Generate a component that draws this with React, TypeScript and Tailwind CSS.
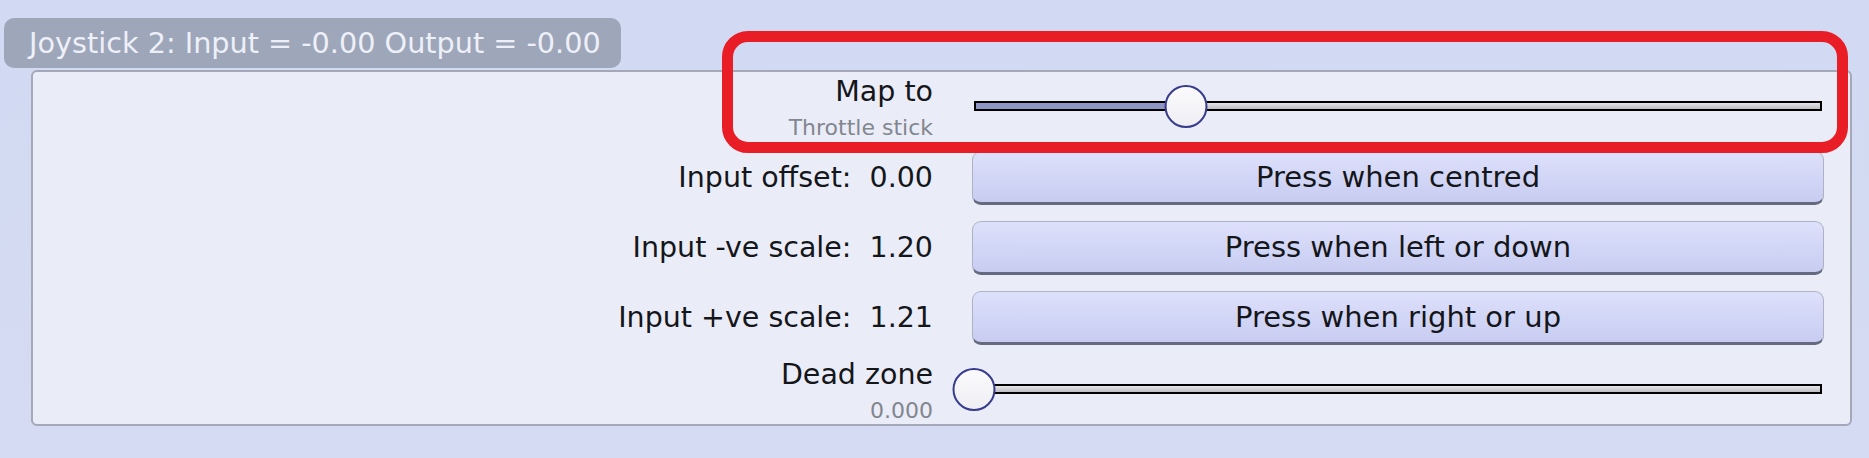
import React from 'react';

const FONT = "font-['DejaVu_Sans','Liberation_Sans',sans-serif]";

// 0..1 value slider, drawn like the app's own control
function Slider({ value }: { value: number }) {
  const pct = `${value * 100}%`;
  return (
    <div className="relative mx-[2px] h-[64px]">
      <div className="absolute left-0 right-0 top-[25px] h-[10px] border-2 border-black bg-gradient-to-b from-[#e6e6ea] to-[#bdbdc2]">
        <div className="h-full bg-[#8e96c6]" style={{ width: pct }} />
      </div>
      <div
        className="absolute top-[8.5px] h-[43px] w-[43px] -translate-x-1/2 rounded-full border-[2.5px] border-[#383c8c] bg-gradient-to-b from-[#fbfbfd] to-[#eeeef3]"
        style={{ left: pct }}
      />
    </div>
  );
}

function Row({ children, label, sub }: { children: React.ReactNode; label: string; sub?: string }) {
  return (
    <div className="flex items-center gap-[39px]">
      <div className="flex-1 text-right">
        <div className="text-[28.5px] leading-[32px] text-[#15161a] whitespace-pre">{label}</div>
        {sub && <div className="mt-[8px] text-[22px] leading-[24px] text-[#82868e]">{sub}</div>}
      </div>
      <div className="w-[852px]">{children}</div>
    </div>
  );
}

function PressButton({ text }: { text: string }) {
  return (
    <button className="h-[54px] w-full rounded-[9px] border border-[#aeb2c4] border-b-[3px] border-b-[#666a80] bg-gradient-to-b from-[#dde1fb] to-[#c8ccf1] text-[29px] leading-[32px] text-[#15161a]">
      {text}
    </button>
  );
}

export default function App() {
  return (
    <div className={`relative h-[458px] w-full overflow-hidden bg-gradient-to-b from-[#d2daf3] to-[#d4dbf2] pt-[18px] ${FONT}`}>
      {/* title tab */}
      <div className="ml-[4px] h-[50px] w-[617px] rounded-[10px] bg-[#9ea6ba] pl-[25px] text-[28.7px] leading-[50px] text-[#eef0f8]">
        Joystick 2: Input = -0.00 Output = -0.00
      </div>

      {/* settings panel */}
      <div className="ml-[31px] mr-[17px] mt-[2px] h-[356px] rounded-[6px] border-2 border-[#a4a8b8] bg-[#eaedf8] pr-[26px] pt-[4px]">
        <Row label="Map to" sub="Throttle stick">
          <Slider value={0.25} />
        </Row>
        <div className="mt-[11px] flex flex-col gap-[16px]">
          <Row label="Input offset:  0.00">
            <PressButton text="Press when centred" />
          </Row>
          <Row label="Input -ve scale:  1.20">
            <PressButton text="Press when left or down" />
          </Row>
          <Row label="Input +ve scale:  1.21">
            <PressButton text="Press when right or up" />
          </Row>
        </div>
        <div className="mt-[14px]">
          <Row label="Dead zone" sub="0.000">
            <Slider value={0} />
          </Row>
        </div>
      </div>

      {/* red highlight drawn over the Map to row */}
      <div className="pointer-events-none absolute left-[722px] top-[31px] h-[122px] w-[1126px] rounded-[26px] border-[11px] border-[#e81d25]" />
    </div>
  );
}
